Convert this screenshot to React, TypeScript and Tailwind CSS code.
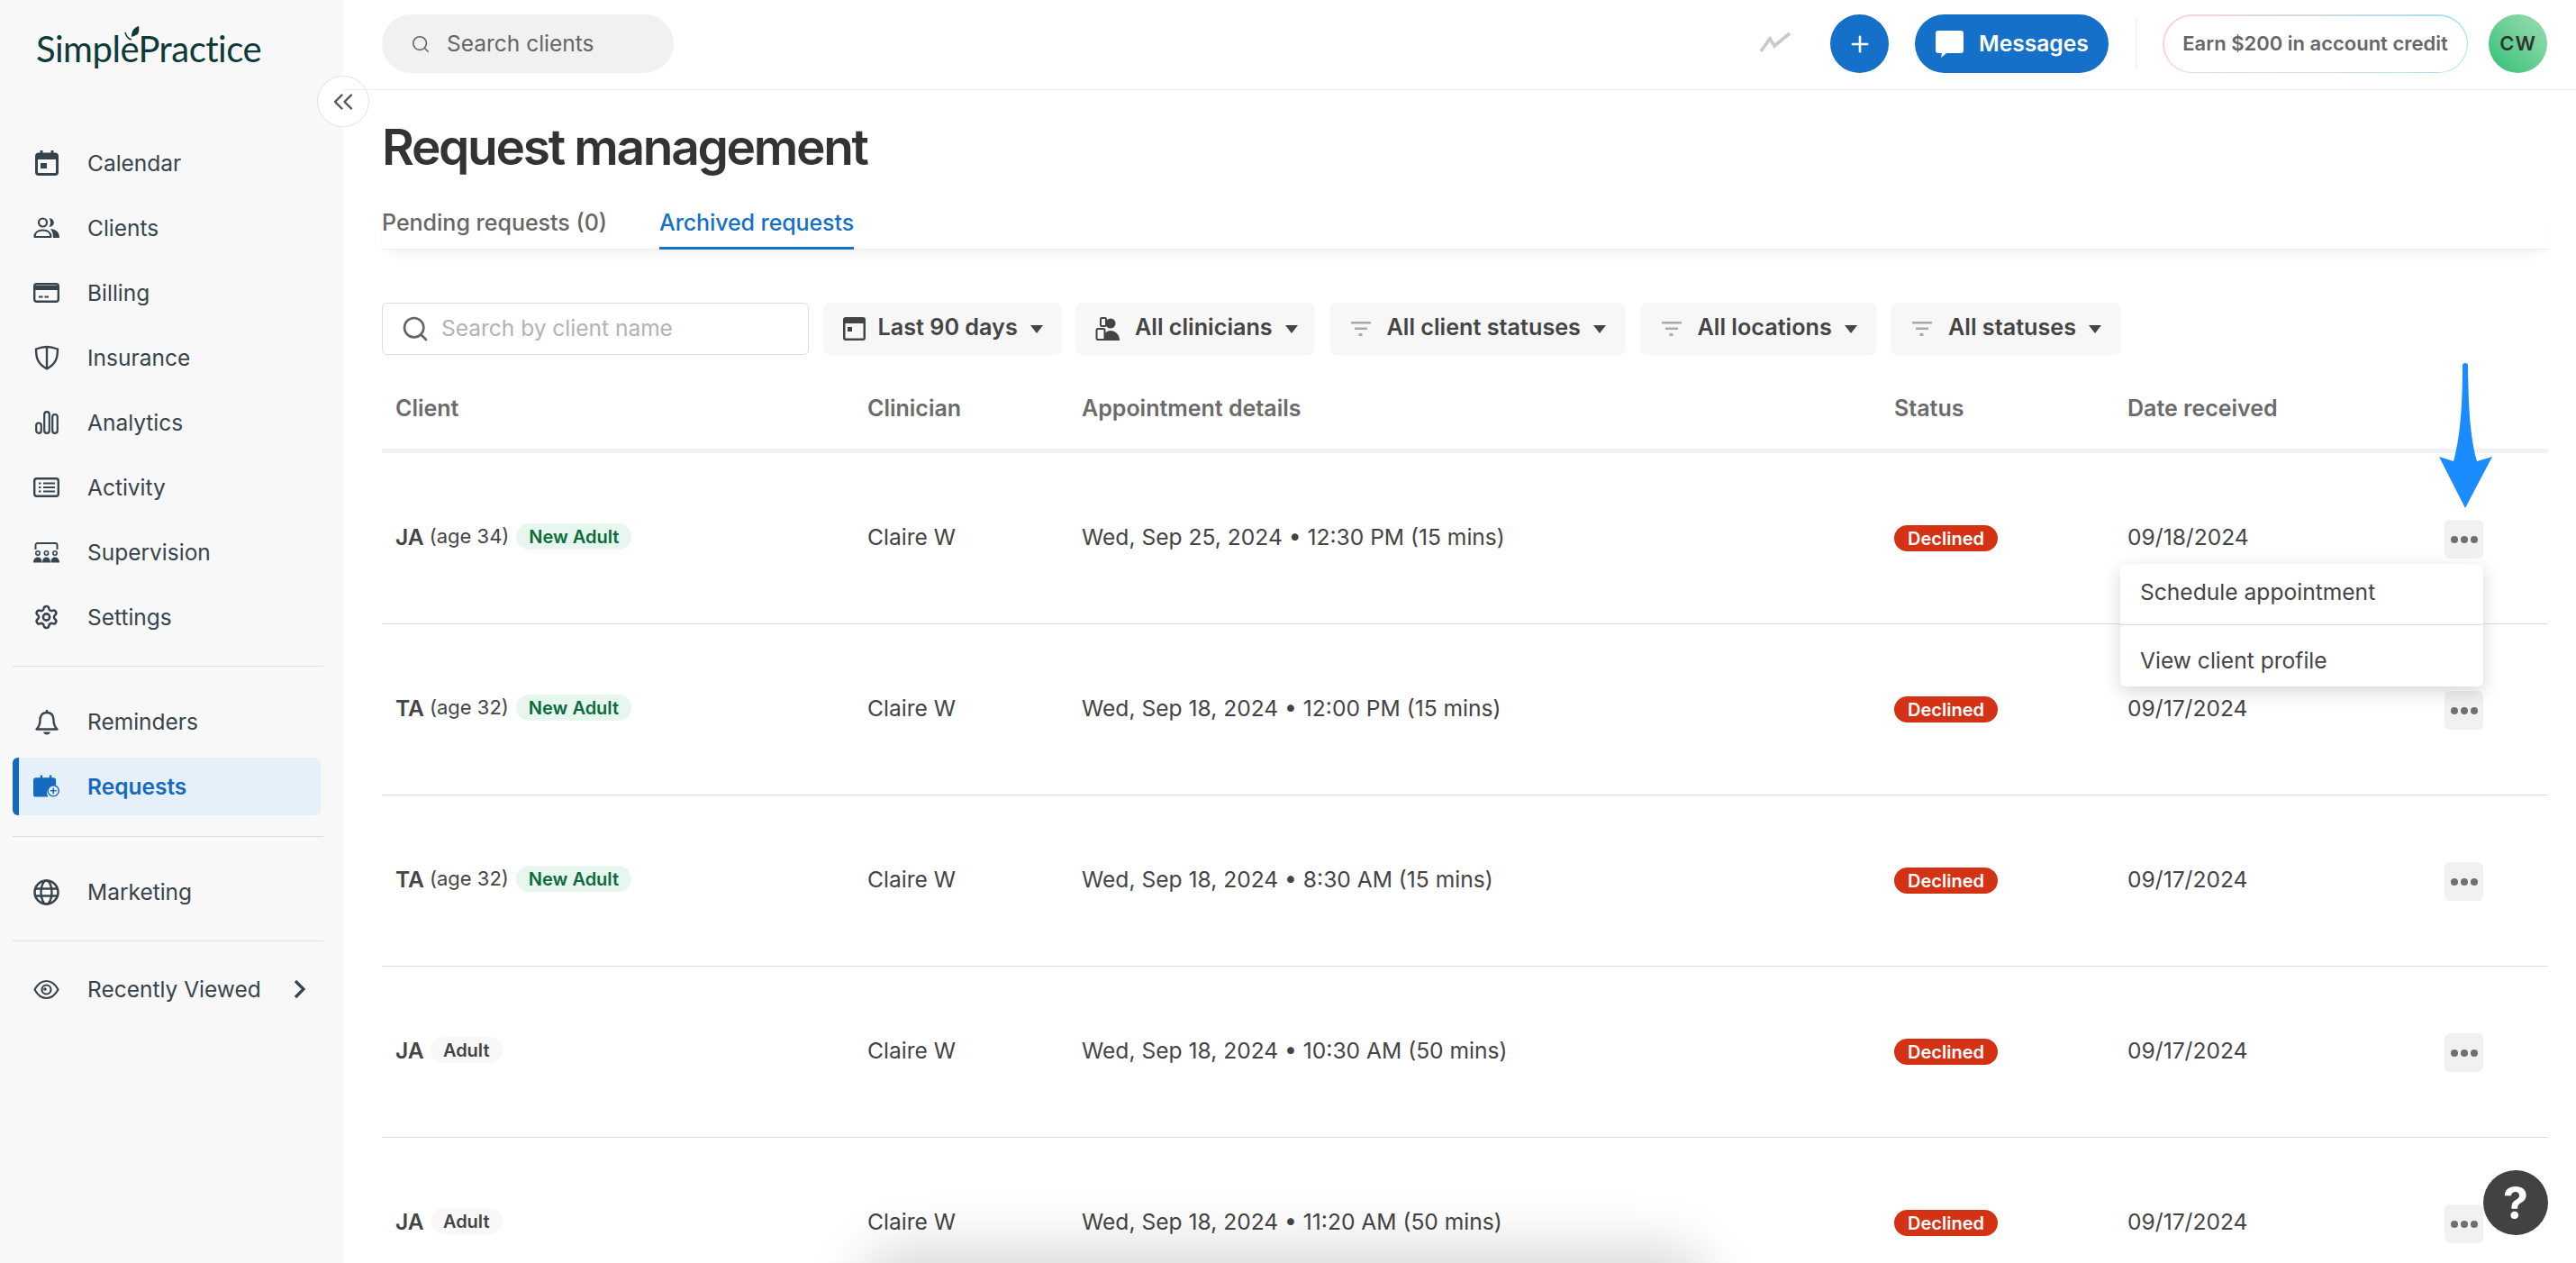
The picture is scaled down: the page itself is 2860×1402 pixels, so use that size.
import React from 'react';
import { ChevronsLeft, Plus, Settings, Search } from 'lucide-react';

const ICON = '#38444d';

const CalendarIcon = () => (
  <svg width="28" height="30" viewBox="0 0 28 30" fill="none">
    <rect x="2.500" y="5" width="23" height="22.500" rx="2.500" stroke={ICON} strokeWidth="3" />
    <rect x="2" y="5" width="24" height="6" fill={ICON} />
    <rect x="6.500" y="1" width="3" height="5" fill={ICON} />
    <rect x="18.500" y="1" width="3" height="5" fill={ICON} />
    <rect x="7" y="15" width="7" height="6" fill={ICON} />
  </svg>
);

const ClientsIcon = () => (
  <svg width="29" height="24" viewBox="0 0 29 24" fill="none">
    <circle cx="10.500" cy="6" r="4.500" stroke={ICON} strokeWidth="2.200" />
    <path d="M1.500 22c0-4.500 3.500-7.500 9-7.500s9 3 9 7.500h-18z" stroke={ICON} strokeWidth="2.200" strokeLinejoin="round" />
    <path d="M17.500 1.200c3.400 0 5.300 2.200 5.300 4.800s-1.900 4.800-5.300 4.800c1-1.400 1.500-3 1.500-4.800s-.5-3.400-1.500-4.800z" fill={ICON} />
    <path d="M19 13c6 .5 10 3.500 10 10h-7c0-4-1-7.500-3-10z" fill={ICON} />
  </svg>
);

const BillingIcon = () => (
  <svg width="29" height="22" viewBox="0 0 29 22" fill="none">
    <rect x="1.200" y="1.200" width="26.600" height="19.600" rx="2.500" stroke={ICON} strokeWidth="2.400" />
    <rect x="1" y="3" width="27" height="5" fill={ICON} />
    <rect x="6" y="14.500" width="4.500" height="2" fill={ICON} />
    <rect x="12.500" y="14.500" width="4.500" height="2" fill={ICON} />
  </svg>
);

const ShieldIcon = () => (
  <svg width="28" height="28" viewBox="0 0 28 28" fill="none">
    <path d="M14 2c4 0 8 1 12 2.500 0 9-1.500 16.500-12 22C3.500 21 2 13.500 2 4.500 6 3 10 2 14 2z" stroke={ICON} strokeWidth="2.400" />
    <path d="M14 2v24" stroke={ICON} strokeWidth="2.400" />
  </svg>
);

const AnalyticsIcon = () => (
  <svg width="26" height="26" viewBox="0 0 26 26" fill="none">
    <rect x="1.200" y="13.500" width="5.600" height="11.300" rx="2.800" stroke={ICON} strokeWidth="2.200" />
    <rect x="10.200" y="1.200" width="5.600" height="23.600" rx="2.800" stroke={ICON} strokeWidth="2.200" />
    <rect x="19.200" y="4" width="5.600" height="20.800" rx="2.800" stroke={ICON} strokeWidth="2.200" />
  </svg>
);

const ActivityIcon = () => (
  <svg width="29" height="22" viewBox="0 0 29 22" fill="none">
    <rect x="1.200" y="1.200" width="26.600" height="19.600" rx="2.500" stroke={ICON} strokeWidth="2.400" />
    <path d="M11 6.500h13M11 11h13M11 15.500h13" stroke={ICON} strokeWidth="2" />
    <path d="M6 6.500h2.500M6 11h2.500M6 15.500h2.500" stroke={ICON} strokeWidth="2" />
  </svg>
);

const SupervisionIcon = () => (
  <svg width="29" height="23" viewBox="0 0 29 23" fill="none">
    <path d="M2.500 8V3a2 2 0 0 1 2-2h20a2 2 0 0 1 2 2v5" stroke={ICON} strokeWidth="2" />
    <circle cx="5" cy="12" r="2.200" stroke={ICON} strokeWidth="1.600" />
    <circle cx="14.500" cy="12" r="2.200" stroke={ICON} strokeWidth="1.600" />
    <circle cx="24" cy="12" r="2.200" stroke={ICON} strokeWidth="1.600" />
    <path d="M0 22.500c0-3.500 2-6 5-6s4.500 2.500 4.500 6H0zM10 22.500c0-3.500 1.500-6 4.500-6s4.500 2.500 4.500 6h-9zM19.500 22.500c0-3.500 1.500-6 4.500-6s5 2.500 5 6h-9.500z" fill={ICON} />
  </svg>
);

const BellIcon = () => (
  <svg width="26" height="29" viewBox="0 0 26 29" fill="none">
    <path d="M13 4c-5 0-7.500 3.500-7.500 8.500 0 4-1 7-4 10h23c-3-3-4-6-4-10C20.500 7.500 18 4 13 4z" stroke={ICON} strokeWidth="2.400" strokeLinejoin="round" />
    <path d="M13 1v3" stroke={ICON} strokeWidth="2.400" />
    <path d="M9 25.500h8c-.5 2-2 3-4 3s-3.500-1-4-3z" fill={ICON} />
  </svg>
);

const RequestsIcon = () => (
  <svg width="30" height="26" viewBox="0 0 30 26" fill="none">
    <path d="M3 3h5V0h2.500v3h8V0H21v3h2a3 3 0 0 1 3 3v5.500a9 9 0 0 0-9 13.500H3a3 3 0 0 1-3-3V6a3 3 0 0 1 3-3z" fill="#1569bf" />
    <circle cx="23" cy="18" r="7" fill="#1569bf" />
    <circle cx="23" cy="18" r="5.500" fill="#e6f0fa" />
    <path d="M19.500 18h7M23 14.500v7" stroke="#1569bf" strokeWidth="1.600" />
  </svg>
);

const GlobeIcon = () => (
  <svg width="29" height="29" viewBox="0 0 29 29" fill="none">
    <circle cx="14.500" cy="14.500" r="13" stroke={ICON} strokeWidth="2.600" />
    <ellipse cx="14.500" cy="14.500" rx="6" ry="13" stroke={ICON} strokeWidth="2.400" />
    <path d="M2 10.500h25M2 18.500h25" stroke={ICON} strokeWidth="2.400" />
  </svg>
);

const EyeIcon = () => (
  <svg width="29" height="23" viewBox="0 0 29 23" fill="none">
    <path d="M1.500 11.500C5 5 9.500 2 14.500 2s9.500 3 13 9.500c-3.500 6.500-8 9.500-13 9.500s-9.500-3-13-9.500z" stroke={ICON} strokeWidth="2.200" />
    <circle cx="14.500" cy="11.500" r="5" stroke={ICON} strokeWidth="2.200" />
    <circle cx="13" cy="11" r="1.800" fill={ICON} />
  </svg>
);

const Caret = () => (
  <svg width="14" height="9" viewBox="0 0 14 9" className="shrink-0">
    <path d="M0 0h14L7 9z" fill="#444" />
  </svg>
);

const FilterIcon = () => (
  <svg width="22" height="16" viewBox="0 0 22 16" className="ml-[2px] shrink-0">
    <path d="M0 0h22v2.500H0zM4 6.500h14V9H4z" fill="#a9a9a9" />
    <rect x="8.500" y="13" width="4" height="3" fill="#a9a9a9" />
  </svg>
);

const navTop = [
  { label: 'Calendar', icon: <CalendarIcon /> },
  { label: 'Clients', icon: <ClientsIcon /> },
  { label: 'Billing', icon: <BillingIcon /> },
  { label: 'Insurance', icon: <ShieldIcon /> },
  { label: 'Analytics', icon: <AnalyticsIcon /> },
  { label: 'Activity', icon: <ActivityIcon /> },
  { label: 'Supervision', icon: <SupervisionIcon /> },
  { label: 'Settings', icon: <Settings size={32} color={ICON} strokeWidth={2.100} /> },
];

const NavItem: React.FC<{ label: string; icon: React.ReactNode }> = ({ label, icon }) => (
  <div className="flex h-[72px] items-center pl-[37px]">
    <span className="flex w-[29px] justify-center">{icon}</span>
    <span className="ml-[31px] pt-[1px] text-[24.500px] text-[#38444d]">{label}</span>
  </div>
);

const Line = () => <div className="ml-[14px] h-px w-[345px] bg-[#dedede]" />;

const Sidebar = () => (
  <aside className="relative w-[381px] shrink-0 bg-[#f8f8f8]">
    <div className="h-[145px] pl-[40px] pt-[26px]">
      <div className="relative inline-block font-['Lato',sans-serif] text-[40px] leading-[56px] tracking-[-0.5px] text-[#0f3a3a]">
        SimplePractice
        <svg width="17" height="16" viewBox="0 0 17 16" className="absolute left-[98px] top-[3px]">
          <path d="M8 12C8 6 10 2 16 0c1 5 0 9-3 10-2 1-4 1.500-5 2z" fill="#0f3a3a" />
          <path d="M1 7c1 4 3 7 7 8" fill="none" stroke="#0f3a3a" strokeWidth="1.500" />
        </svg>
      </div>
    </div>
    {navTop.map((n) => (
      <NavItem key={n.label} label={n.label} icon={n.icon} />
    ))}
    <div className="mt-[18px]">
      <Line />
    </div>
    <div className="mt-[25px]">
      <NavItem label="Reminders" icon={<BellIcon />} />
    </div>
    <div className="ml-[14px] mt-[4px] flex h-[64px] w-[342px] items-center rounded-[6px] border-l-[7px] border-[#1569bf] bg-[#e6f0fa] pl-[16px]">
      <span className="flex w-[29px] justify-center">
        <RequestsIcon />
      </span>
      <span className="ml-[31px] pt-[1px] text-[24.500px] font-semibold text-[#1569bf]">Requests</span>
    </div>
    <div className="mt-[23px]">
      <Line />
    </div>
    <div className="mt-[25px]">
      <NavItem label="Marketing" icon={<GlobeIcon />} />
    </div>
    <div className="mt-[18px]">
      <Line />
    </div>
    <div className="mt-[17px] flex h-[72px] items-center pl-[37px]">
      <span className="flex w-[29px] justify-center">
        <EyeIcon />
      </span>
      <span className="ml-[31px] pt-[1px] text-[24.500px] text-[#38444d]">Recently Viewed</span>
      <svg width="14" height="22" viewBox="0 0 14 22" fill="none" className="ml-[36px]">
        <path d="M2 2l9 9-9 9" stroke={ICON} strokeWidth="3.200" />
      </svg>
    </div>
    <button className="absolute left-[352px] top-[84px] flex h-[57px] w-[58px] items-center justify-center rounded-full border border-[#e2e2e2] bg-white">
      <ChevronsLeft size={36} color="#555" strokeWidth={1.600} />
    </button>
  </aside>
);

const TopBar = () => (
  <header className="flex h-[100px] items-start border-b border-[#eeeeee] pl-[43px] pt-[16px]">
    <div className="flex h-[65px] w-[324px] items-center rounded-full bg-[#f1f1f1] pl-[32px]">
      <Search size={22} color="#666" strokeWidth={1.800} />
      <span className="ml-[18px] text-[24.500px] text-[#666]">Search clients</span>
    </div>
    <svg width="36" height="24" viewBox="0 0 36 24" fill="none" className="ml-[1206px] mt-[19px]">
      <path d="M1 22L11 8l5 8L33 2" stroke="#c9c9c9" strokeWidth="3.600" />
    </svg>
    <div className="ml-[42px] flex h-[65px] w-[65px] items-center justify-center rounded-full bg-[#1570c9]">
      <Plus size={28} color="#fff" strokeWidth={2.200} />
    </div>
    <div className="ml-[29px] flex h-[65px] w-[215px] items-center rounded-full bg-[#1570c9] pl-[23px]">
      <svg width="31" height="30" viewBox="0 0 31 30">
        <path d="M3 0h25a3 3 0 0 1 3 3v19a3 3 0 0 1-3 3H12l-6 5 1-5H3a3 3 0 0 1-3-3V3a3 3 0 0 1 3-3z" fill="#fff" />
      </svg>
      <span className="ml-[17px] text-[24.600px] font-semibold text-white">Messages</span>
    </div>
    <div className="ml-[30px] mt-[4px] h-[57px] w-px bg-[#eeeeee]" />
    <div className="ml-[29px] h-[65px] w-[339px] rounded-full bg-gradient-to-r from-[#ffd3d3] to-[#9fe0f5] p-[1.500px]">
      <div className="flex h-full items-center justify-center rounded-full bg-white text-[22px] font-semibold text-[#666]">
        Earn $200 in account credit
      </div>
    </div>
    <div className="ml-[23px] flex h-[65px] w-[65px] items-center justify-center rounded-full bg-gradient-to-tr from-[#1fc077] to-[#9adcb2] text-[22px] font-semibold tracking-[1px] text-[#333]">
      CW
    </div>
  </header>
);

const Filter: React.FC<{ w: string; gap: string; icon: React.ReactNode; label: string }> = ({ w, gap, icon, label }) => (
  <div className={`flex h-[58px] items-center rounded-[8px] bg-[#f7f7f7] pl-[22px] ${w}`}>
    {icon}
    <span className={`mb-[2px] mr-[14px] text-[25.200px] font-semibold text-[#444] ${gap}`}>{label}</span>
    <Caret />
  </div>
);

const COLS = 'grid grid-cols-[524px_238px_902px_259px_352px_43px_1fr] pl-[15px]';

const rows = [
  { id: 'JA', age: '(age 34)', tag: 'New Adult', appt: 'Wed, Sep 25, 2024 • 12:30 PM (15 mins)', date: '09/18/2024' },
  { id: 'TA', age: '(age 32)', tag: 'New Adult', appt: 'Wed, Sep 18, 2024 • 12:00 PM (15 mins)', date: '09/17/2024' },
  { id: 'TA', age: '(age 32)', tag: 'New Adult', appt: 'Wed, Sep 18, 2024 • 8:30 AM (15 mins)', date: '09/17/2024' },
  { id: 'JA', age: '', tag: 'Adult', appt: 'Wed, Sep 18, 2024 • 10:30 AM (50 mins)', date: '09/17/2024' },
  { id: 'JA', age: '', tag: 'Adult', appt: 'Wed, Sep 18, 2024 • 11:20 AM (50 mins)', date: '09/17/2024' },
];

const Row: React.FC<{ r: (typeof rows)[number] }> = ({ r }) => (
  <div className={`${COLS} h-[190px] items-center border-b border-[#dddddd] text-[24.600px] text-[#444]`}>
    <div className="mb-[3px] flex items-center">
      <span className="font-semibold">{r.id}</span>
      {r.age && <span className="ml-[6px] text-[22px]">{r.age}</span>}
      {r.tag === 'New Adult' ? (
        <span className="ml-[8px] flex h-[29px] w-[128px] items-center justify-center rounded-full bg-[#e7f6ee] text-[20px] font-semibold text-[#0b6b3a]">
          New Adult
        </span>
      ) : (
        <span className="ml-[7px] flex h-[29px] w-[80px] items-center justify-center rounded-full bg-[#f8f8f8] text-[20px] font-semibold text-[#444]">
          Adult
        </span>
      )}
    </div>
    <div className="mb-[3px]">Claire W</div>
    <div className="mb-[3px]">{r.appt}</div>
    <div>
      <span className="flex h-[29px] w-[115px] items-center justify-center rounded-full bg-[#d43214] text-[20px] font-semibold text-white">
        Declined
      </span>
    </div>
    <div className="mb-[3px]">{r.date}</div>
    <div className="mt-[2px] flex h-[43px] w-[43px] items-center justify-center gap-[3px] rounded-[6px] bg-[#f1f1f1]">
      <span className="h-[8px] w-[8px] rounded-full bg-[#707070]" />
      <span className="h-[8px] w-[8px] rounded-full bg-[#707070]" />
      <span className="h-[8px] w-[8px] rounded-full bg-[#707070]" />
    </div>
  </div>
);

const Main = () => (
  <main className="relative min-w-0 flex-1 overflow-hidden">
    <TopBar />
    <div className="pl-[43px] pr-[31px]">
      <h1 className="mt-[31px] text-[55px] font-semibold leading-[64px] tracking-[-2.300px] text-[#333]">
        Request management
      </h1>
      <div className="mt-[34px] flex gap-[58px] border-b border-[#eeeeee] shadow-[0_10px_14px_-8px_rgba(0,0,0,0.08)]">
        <div className="-mb-px h-[48px] text-[25px] font-medium leading-[36px] text-[#666]">Pending requests (0)</div>
        <div className="-mb-px h-[48px] border-b-[3px] border-[#1570c9] text-[25px] font-medium leading-[36px] tracking-[-0.1px] text-[#1570c9]">
          Archived requests
        </div>
      </div>
      <div className="mt-[59px] flex gap-[15.500px]">
        <div className="flex h-[58px] w-[474px] items-center rounded-[6px] border border-[#dddddd] pl-[20px]">
          <Search size={32} color="#666" strokeWidth={2} />
          <span className="mb-[2px] ml-[13px] text-[24.500px] text-[#b3b3b3]">Search by client name</span>
        </div>
        <Filter
          w="w-[265px]"
          gap="ml-[14px]"
          label="Last 90 days"
          icon={
            <svg width="25" height="26" viewBox="0 0 25 26" className="shrink-0">
              <rect width="25" height="26" rx="3" fill="#444" />
              <rect x="2.500" y="7" width="20" height="16.500" fill="#f7f7f7" />
              <rect x="5" y="11" width="5" height="5" fill="#444" />
            </svg>
          }
        />
        <Filter
          w="w-[266px]"
          gap="ml-[16px]"
          label="All clinicians"
          icon={
            <svg width="28" height="28" viewBox="0 0 28 28" className="shrink-0">
              <circle cx="17" cy="8" r="5.500" fill="#444" />
              <path d="M8 27c0-7 4-11 9-11s10 4 10 11H8z" fill="#444" />
              <rect x="1.500" y="14" width="9" height="12" rx="1.500" fill="#f7f7f7" stroke="#444" strokeWidth="2" />
              <rect x="6" y="2" width="6" height="9" rx="1" fill="#f7f7f7" stroke="#444" strokeWidth="2" />
            </svg>
          }
        />
        <Filter w="w-[329.500px]" gap="ml-[18px]" label="All client statuses" icon={<FilterIcon />} />
        <Filter w="w-[263px]" gap="ml-[18px]" label="All locations" icon={<FilterIcon />} />
        <Filter w="w-[256px]" gap="ml-[18px]" label="All statuses" icon={<FilterIcon />} />
      </div>
      <div className={`${COLS} border-b-[5px] border-[#f2f2f2] pb-[27px] pt-[41px] text-[25px] font-semibold leading-[36px] text-[#6b6b6b]`}>
        <div>Client</div>
        <div>Clinician</div>
        <div>Appointment details</div>
        <div>Status</div>
        <div>Date received</div>
      </div>
      {rows.map((r, i) => (
        <Row key={i} r={r} />
      ))}
    </div>
  </main>
);

export default function App() {
  return (
    <div className="relative flex h-[1402px] w-[2860px] overflow-hidden bg-white font-['Inter',sans-serif]">
      <Sidebar />
      <Main />

      {/* arrow annotation */}
      <svg width="60" height="161" viewBox="0 0 60 161" className="absolute left-[2708px] top-[403px]">
        <path d="M29 0c2 0 3 1 3 3 .5 30 1 75 10 106l17-5-30 57L0 104l16 5C25 78 26 33 26 3c0-2 1-3 3-3z" fill="#1a8cff" />
      </svg>

      {/* row menu */}
      <div className="absolute left-[2354px] top-[626px] h-[136px] w-[403px] rounded-[6px] bg-white text-[24.600px] leading-[32px] text-[#444] shadow-[0_6px_20px_rgba(0,0,0,0.16)]">
        <div className="h-[68px] border-b border-[#dddddd] pl-[22px] pt-[15px]">Schedule appointment</div>
        <div className="pl-[22px] pt-[23px]">View client profile</div>
      </div>

      {/* help button */}
      <div className="absolute left-[2757px] top-[1299px] flex h-[72px] w-[72px] items-center justify-center rounded-full bg-[#424242] text-[50px] font-bold text-white">
        ?
      </div>

      {/* shadow of a panel below the fold */}
      <div className="absolute left-[980px] top-[1412px] h-[60px] w-[890px] rounded-full shadow-[0_0_60px_30px_rgba(0,0,0,0.15)]" />
    </div>
  );
}
